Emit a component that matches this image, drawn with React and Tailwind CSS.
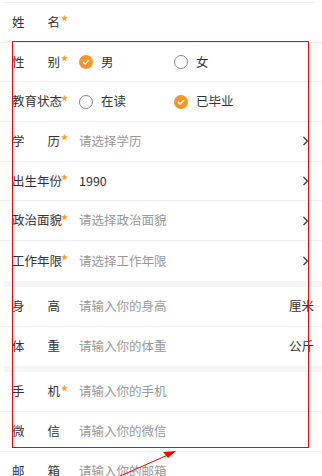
import React from 'react';

const font = { fontFamily: '"Noto Sans CJK SC", "Noto Sans", sans-serif' };

function Label({ text, required }) {
  const chars = text.split('');
  return (
    <div className="flex items-center shrink-0">
      <span className="w-[48px] flex justify-between text-[12.5px] text-[#333]">
        {chars.map((c, i) => (
          <span key={i}>{c}</span>
        ))}
      </span>
      <span className="w-[19px] pl-[1px] text-[14px] font-bold text-[#f5a033] leading-none -mt-[2px]">{required ? '*' : ''}</span>
    </div>
  );
}

function Chevron() {
  return (
    <svg width="7" height="10" viewBox="0 0 7 10" className="shrink-0 mr-[5px]">
      <path d="M1.5 1 L5.5 5 L1.5 9" fill="none" stroke="#333" strokeWidth="1.2" />
    </svg>
  );
}

function Radio({ checked, label }) {
  return (
    <div className="w-[95px] flex items-center gap-[8px]">
      {checked ? (
        <span className="w-[14px] h-[14px] rounded-full bg-[#f5962a] flex items-center justify-center">
          <svg width="8" height="6" viewBox="0 0 8 6">
            <path d="M1 3 L3.2 5 L7 1" fill="none" stroke="#fff" strokeWidth="1.4" />
          </svg>
        </span>
      ) : (
        <span className="w-[14px] h-[14px] rounded-full border border-[#888]" />
      )}
      <span className="text-[12.5px] text-[#333]">{label}</span>
    </div>
  );
}

function Row({ label, required, children, last }) {
  return (
    <div className={`h-[39.7px] flex items-center pl-[12px] pr-[8px] ${last ? '' : 'border-b border-[#eeeeee]'}`}>
      <Label text={label} required={required} />
      <div className="flex-1 flex items-center min-w-0">{children}</div>
    </div>
  );
}

function Placeholder({ text }) {
  return <span className="flex-1 text-[12.5px] text-[#999]">{text}</span>;
}

export default function App() {
  return (
    <div className="relative w-[322px] h-[476px] overflow-hidden bg-white" style={font}>
      <div className="pt-[2px]">
        <div className="border-t border-[#eeeeee] ml-[4px] mr-[8px]" />
        <Row label="姓名" required />
        <Row label="性别" required>
          <Radio checked label="男" />
          <Radio label="女" />
        </Row>
        <Row label="教育状态" required>
          <Radio label="在读" />
          <Radio checked label="已毕业" />
        </Row>
        <Row label="学历" required>
          <Placeholder text="请选择学历" />
          <Chevron />
        </Row>
        <Row label="出生年份" required>
          <span className="flex-1 text-[12.5px] text-[#333]">1990</span>
          <Chevron />
        </Row>
        <Row label="政治面貌" required>
          <Placeholder text="请选择政治面貌" />
          <Chevron />
        </Row>
        <Row label="工作年限" required last>
          <Placeholder text="请选择工作年限" />
          <Chevron />
        </Row>
        <div className="h-[6px] ml-[4px] bg-[#f5f5f5]" />
        <Row label="身高">
          <Placeholder text="请输入你的身高" />
          <span className="text-[12.5px] text-[#333]">厘米</span>
        </Row>
        <Row label="体重" last>
          <Placeholder text="请输入你的体重" />
          <span className="text-[12.5px] text-[#333]">公斤</span>
        </Row>
        <div className="h-[6px] ml-[4px] bg-[#f5f5f5]" />
        <Row label="手机" required>
          <Placeholder text="请输入你的手机" />
        </Row>
        <Row label="微信">
          <Placeholder text="请输入你的微信" />
        </Row>
        <Row label="邮箱">
          <Placeholder text="请输入你的邮箱" />
        </Row>
      </div>

      {/* annotation overlay */}
      <div className="absolute left-[12px] top-[41px] w-[297px] h-[407px] border border-[#ff0000] pointer-events-none" />
      <svg className="absolute left-0 top-0 pointer-events-none" width="322" height="476" viewBox="0 0 322 476">
        <line x1="118" y1="477" x2="170" y2="454" stroke="#ff0000" strokeWidth="1" />
        <path d="M176 451 L163 452 L168 458 Z" fill="#ff0000" />
      </svg>
    </div>
  );
}
